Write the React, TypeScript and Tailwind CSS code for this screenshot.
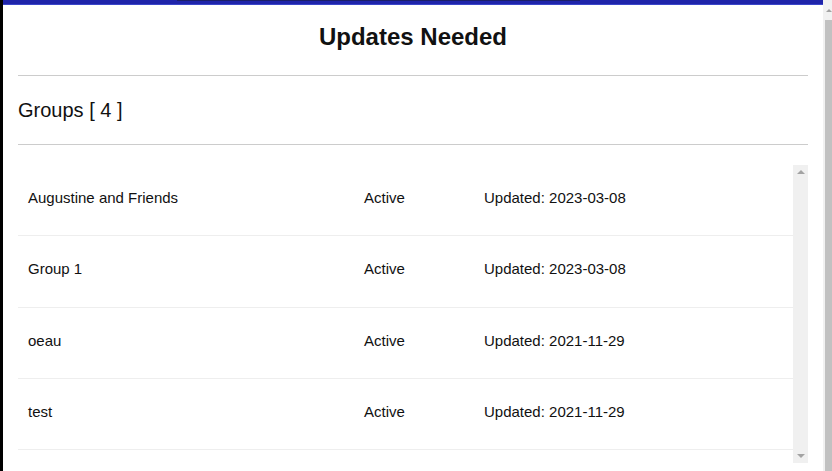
import React from 'react';

interface Group {
  name: string;
  status: string;
  updated: string;
}

const groups: Group[] = [
  {name: 'Augustine and Friends', status: 'Active', updated: '2023-03-08'},
  {name: 'Group 1', status: 'Active', updated: '2023-03-08'},
  {name: 'oeau', status: 'Active', updated: '2021-11-29'},
  {name: 'test', status: 'Active', updated: '2021-11-29'},
];

const GroupRow: React.FC<{group: Group}> = ({group}) => (
  <div className="flex h-[71.33px] border-b border-[#eeeeee] pl-[10px] pt-[24px] text-[15px] leading-[18px] text-[#111]">
    <div className="w-[336px]">{group.name}</div>
    <div className="w-[120px]">{group.status}</div>
    <div>Updated: {group.updated}</div>
  </div>
);

export default function App() {
  return (
    <div className="flex h-[471px] overflow-hidden bg-white font-['Liberation_Sans',Arial,sans-serif]">
      <div className="flex flex-1 flex-col border-l-[3px] border-black">
        <div className="relative h-[5px] bg-[#1f24aa] border-b border-[#3a45c9]">
          <div className="absolute left-[174px] top-0 h-[1px] w-[403px] bg-[#1b1f6a]" />
        </div>
        <div className="flex flex-col px-[15px]">
          <h1 className="mt-[18px] text-center text-[24px] font-bold leading-[28px] text-[#111]">
            Updates Needed
          </h1>
          <div className="mt-[24px] h-px bg-[#cccccc]" />
          <h2 className="mt-[22px] text-[20px] leading-[24px] text-[#111]">Groups [ 4 ]</h2>
          <div className="mt-[22px] h-px bg-[#cccccc]" />
          <div className="mt-[20px] flex h-[298px] overflow-hidden">
            <div className="flex-1">
              {groups.map((g) => (
                <GroupRow key={g.name} group={g} />
              ))}
            </div>
            <div className="flex w-[15px] flex-col items-center justify-between bg-[#f0f0f0] py-[5px]">
              <div className="h-0 w-0 border-x-[4px] border-b-[4px] border-x-transparent border-b-[#a3a3a3]" />
              <div className="h-0 w-0 border-x-[4px] border-t-[4px] border-x-transparent border-t-[#a3a3a3]" />
            </div>
          </div>
        </div>
      </div>
      <div className="flex w-[9px] flex-col bg-[#f1f1f1] pl-[2px]">
        <div className="flex h-[20px] items-center justify-center">
          <div className="h-0 w-0 border-x-[3px] border-b-[3px] border-x-transparent border-b-[#a3a3a3]" />
        </div>
        <div className="flex-1 bg-[#c1c1c1]" />
      </div>
    </div>
  );
}
